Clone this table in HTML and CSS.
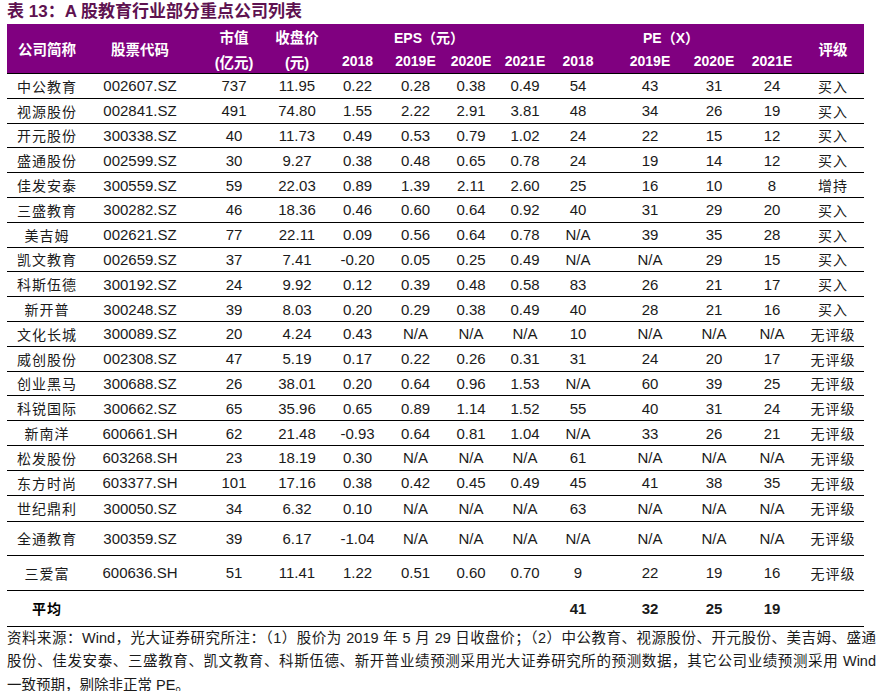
FILE: index.html
```html
<!DOCTYPE html>
<html lang="zh">
<head>
<meta charset="utf-8">
<title>A股教育行业部分重点公司列表</title>
<link rel="stylesheet" href="styles.css">
</head>
<body>
<div class="page">
  <h1 class="title">表 13：A 股教育行业部分重点公司列表</h1>
  <table class="tbl">
    <colgroup>
      <col class="w1"><col class="w2"><col class="w3"><col class="w4"><col class="w5"><col class="w6"><col class="w7"><col class="w8"><col class="w9"><col class="w10"><col class="w11"><col class="w12"><col class="w13">
    </colgroup>
    <thead>
      <tr class="h1">
        <th rowspan="2" class="c1">公司简称</th>
        <th rowspan="2" class="c2">股票代码</th>
        <th class="c3">市值</th>
        <th class="c4">收盘价</th>
        <th colspan="4" class="eps">EPS（元）</th>
        <th colspan="4" class="pe">PE（X）</th>
        <th rowspan="2" class="c13">评级</th>
      </tr>
      <tr class="h2">
        <th class="c3">(亿元)</th>
        <th class="c4">(元)</th>
        <th>2018</th>
        <th>2019E</th>
        <th>2020E</th>
        <th>2021E</th>
        <th class="c9">2018</th>
        <th class="c10">2019E</th>
        <th class="c11">2020E</th>
        <th>2021E</th>
      </tr>
    </thead>
    <tbody>
      <tr><td class="c1 cn">中公教育</td><td>002607.SZ</td><td class="c3">737</td><td class="c4">11.95</td><td>0.22</td><td>0.28</td><td>0.38</td><td>0.49</td><td class="c9">54</td><td class="c10">43</td><td class="c11">31</td><td>24</td><td class="cn">买入</td></tr>
      <tr><td class="c1 cn">视源股份</td><td>002841.SZ</td><td class="c3">491</td><td class="c4">74.80</td><td>1.55</td><td>2.22</td><td>2.91</td><td>3.81</td><td class="c9">48</td><td class="c10">34</td><td class="c11">26</td><td>19</td><td class="cn">买入</td></tr>
      <tr><td class="c1 cn">开元股份</td><td>300338.SZ</td><td class="c3">40</td><td class="c4">11.73</td><td>0.49</td><td>0.53</td><td>0.79</td><td>1.02</td><td class="c9">24</td><td class="c10">22</td><td class="c11">15</td><td>12</td><td class="cn">买入</td></tr>
      <tr><td class="c1 cn">盛通股份</td><td>002599.SZ</td><td class="c3">30</td><td class="c4">9.27</td><td>0.38</td><td>0.48</td><td>0.65</td><td>0.78</td><td class="c9">24</td><td class="c10">19</td><td class="c11">14</td><td>12</td><td class="cn">买入</td></tr>
      <tr><td class="c1 cn">佳发安泰</td><td>300559.SZ</td><td class="c3">59</td><td class="c4">22.03</td><td>0.89</td><td>1.39</td><td>2.11</td><td>2.60</td><td class="c9">25</td><td class="c10">16</td><td class="c11">10</td><td>8</td><td class="cn">增持</td></tr>
      <tr><td class="c1 cn">三盛教育</td><td>300282.SZ</td><td class="c3">46</td><td class="c4">18.36</td><td>0.46</td><td>0.60</td><td>0.64</td><td>0.92</td><td class="c9">40</td><td class="c10">31</td><td class="c11">29</td><td>20</td><td class="cn">买入</td></tr>
      <tr><td class="c1 cn">美吉姆</td><td>002621.SZ</td><td class="c3">77</td><td class="c4">22.11</td><td>0.09</td><td>0.56</td><td>0.64</td><td>0.78</td><td class="c9">N/A</td><td class="c10">39</td><td class="c11">35</td><td>28</td><td class="cn">买入</td></tr>
      <tr><td class="c1 cn">凯文教育</td><td>002659.SZ</td><td class="c3">37</td><td class="c4">7.41</td><td>-0.20</td><td>0.05</td><td>0.25</td><td>0.49</td><td class="c9">N/A</td><td class="c10">N/A</td><td class="c11">29</td><td>15</td><td class="cn">买入</td></tr>
      <tr><td class="c1 cn">科斯伍德</td><td>300192.SZ</td><td class="c3">24</td><td class="c4">9.92</td><td>0.12</td><td>0.39</td><td>0.48</td><td>0.58</td><td class="c9">83</td><td class="c10">26</td><td class="c11">21</td><td>17</td><td class="cn">买入</td></tr>
      <tr><td class="c1 cn">新开普</td><td>300248.SZ</td><td class="c3">39</td><td class="c4">8.03</td><td>0.20</td><td>0.29</td><td>0.38</td><td>0.49</td><td class="c9">40</td><td class="c10">28</td><td class="c11">21</td><td>16</td><td class="cn">买入</td></tr>
      <tr><td class="c1 cn">文化长城</td><td>300089.SZ</td><td class="c3">20</td><td class="c4">4.24</td><td>0.43</td><td>N/A</td><td>N/A</td><td>N/A</td><td class="c9">10</td><td class="c10">N/A</td><td class="c11">N/A</td><td>N/A</td><td class="cn">无评级</td></tr>
      <tr><td class="c1 cn">威创股份</td><td>002308.SZ</td><td class="c3">47</td><td class="c4">5.19</td><td>0.17</td><td>0.22</td><td>0.26</td><td>0.31</td><td class="c9">31</td><td class="c10">24</td><td class="c11">20</td><td>17</td><td class="cn">无评级</td></tr>
      <tr><td class="c1 cn">创业黑马</td><td>300688.SZ</td><td class="c3">26</td><td class="c4">38.01</td><td>0.20</td><td>0.64</td><td>0.96</td><td>1.53</td><td class="c9">N/A</td><td class="c10">60</td><td class="c11">39</td><td>25</td><td class="cn">无评级</td></tr>
      <tr><td class="c1 cn">科锐国际</td><td>300662.SZ</td><td class="c3">65</td><td class="c4">35.96</td><td>0.65</td><td>0.89</td><td>1.14</td><td>1.52</td><td class="c9">55</td><td class="c10">40</td><td class="c11">31</td><td>24</td><td class="cn">无评级</td></tr>
      <tr><td class="c1 cn">新南洋</td><td>600661.SH</td><td class="c3">62</td><td class="c4">21.48</td><td>-0.93</td><td>0.64</td><td>0.81</td><td>1.04</td><td class="c9">N/A</td><td class="c10">33</td><td class="c11">26</td><td>21</td><td class="cn">无评级</td></tr>
      <tr><td class="c1 cn">松发股份</td><td>603268.SH</td><td class="c3">23</td><td class="c4">18.19</td><td>0.30</td><td>N/A</td><td>N/A</td><td>N/A</td><td class="c9">61</td><td class="c10">N/A</td><td class="c11">N/A</td><td>N/A</td><td class="cn">无评级</td></tr>
      <tr><td class="c1 cn">东方时尚</td><td>603377.SH</td><td class="c3">101</td><td class="c4">17.16</td><td>0.38</td><td>0.42</td><td>0.45</td><td>0.49</td><td class="c9">45</td><td class="c10">41</td><td class="c11">38</td><td>35</td><td class="cn">无评级</td></tr>
      <tr class="r26"><td class="c1 cn">世纪鼎利</td><td>300050.SZ</td><td class="c3">34</td><td class="c4">6.32</td><td>0.10</td><td>N/A</td><td>N/A</td><td>N/A</td><td class="c9">63</td><td class="c10">N/A</td><td class="c11">N/A</td><td>N/A</td><td class="cn">无评级</td></tr>
      <tr class="r34"><td class="c1 cn">全通教育</td><td>300359.SZ</td><td class="c3">39</td><td class="c4">6.17</td><td>-1.04</td><td>N/A</td><td>N/A</td><td>N/A</td><td class="c9">N/A</td><td class="c10">N/A</td><td class="c11">N/A</td><td>N/A</td><td class="cn">无评级</td></tr>
      <tr class="r35"><td class="c1 cn">三爱富</td><td>600636.SH</td><td class="c3">51</td><td class="c4">11.41</td><td>1.22</td><td>0.51</td><td>0.60</td><td>0.70</td><td class="c9">9</td><td class="c10">22</td><td class="c11">19</td><td>16</td><td class="cn">无评级</td></tr>
      <tr class="avg"><td class="c1 cn b">平均</td><td></td><td></td><td></td><td></td><td></td><td></td><td></td><td class="c9 b">41</td><td class="c10 b">32</td><td class="c11 b">25</td><td class="b">19</td><td></td></tr>
    </tbody>
  </table>
  <div class="note">
    <p class="line full">资料来源：Wind，光大证券研究所注：（1）股价为 2019 年 5 月 29 日收盘价；（2）中公教育、视源股份、开元股份、美吉姆、盛通</p>
    <p class="line full">股份、佳发安泰、三盛教育、凯文教育、科斯伍德、新开普业绩预测采用光大证券研究所的预测数据，其它公司业绩预测采用 Wind</p>
    <p class="line">一致预期，剔除非正常 PE。</p>
  </div>
</div>
</body>
</html>
```

FILE: styles.css
```css
html, body {
  margin: 0;
  padding: 0;
  background: #ffffff;
}
.page {
  padding-left: 7px;
  font-family: "Liberation Sans", "Noto Sans CJK SC", Arial, sans-serif;
  color: #1a1a1a;
}
.title {
  margin: 0;
  height: 24px;
  line-height: 24px;
  font-size: 17px;
  font-weight: 700;
  color: #5e1250;
  font-family: "Liberation Sans", "Noto Sans CJK SC", sans-serif;
}
.tbl {
  width: 857px;
  table-layout: fixed;
  border-collapse: collapse;
  border-spacing: 0;
  font-size: 15px;
}
.w1 { width: 86px; }
.w2 { width: 94px; }
.w3 { width: 79px; }
.w4 { width: 62px; }
.w5 { width: 59px; }
.w6 { width: 57px; }
.w7 { width: 54px; }
.w8 { width: 54px; }
.w9 { width: 62px; }
.w10 { width: 68px; }
.w11 { width: 60px; }
.w12 { width: 60px; }
.w13 { width: 62px; }

.tbl th, .tbl td {
  padding: 0;
  text-align: center;
  white-space: nowrap;
  overflow: visible;
}
.tbl thead th {
  background: #800080;
  color: #ffffff;
  font-weight: 700;
  font-size: 14px;
}
.tbl thead .c1, .tbl thead .c2, .tbl thead .c13,
.tbl thead .c3, .tbl thead .c4 {
  font-size: 14.5px;
}
.h1 th { height: 25px; }
.h2 th { height: 24px; border-bottom: 1px solid #000; }
.tbl thead th[rowspan] { border-bottom: 1px solid #000; }
.eps { padding-right: 22px !important; }
.pe { padding-right: 12px !important; }

.tbl tbody td {
  height: 23.8px;
  border-bottom: 1px solid #000;
  color: #1a1a1a;
}
.tbl tbody .r26 td { height: 25px; }
.tbl tbody .r34 td { height: 33px; }
.tbl tbody .r35 td { height: 34px; }
.tbl tbody .avg td { height: 35px; }

.cn {
  font-family: "Noto Sans CJK SC", sans-serif;
  font-size: 14px;
  color: #333;
  letter-spacing: 1px;
}
.b { font-weight: 700; color: #000; }
.avg .cn { color: #000; }

.c1 { padding-right: 6px !important; }
.c3 { padding-left: 15px !important; }
.c9 { padding-right: 10px !important; }
.c10 { padding-left: 4px !important; }
.c11 { padding-left: 4px !important; }

.note {
  width: 869px;
  font-size: 14.5px;
  font-family: "Liberation Sans", "Noto Sans CJK SC", sans-serif;
  color: #1a1a1a;
}
.line {
  margin: 0;
  height: 23.5px;
  line-height: 23.5px;
  white-space: normal;
  overflow: hidden;
}
.full {
  text-align: justify;
  text-align-last: justify;
}
```
